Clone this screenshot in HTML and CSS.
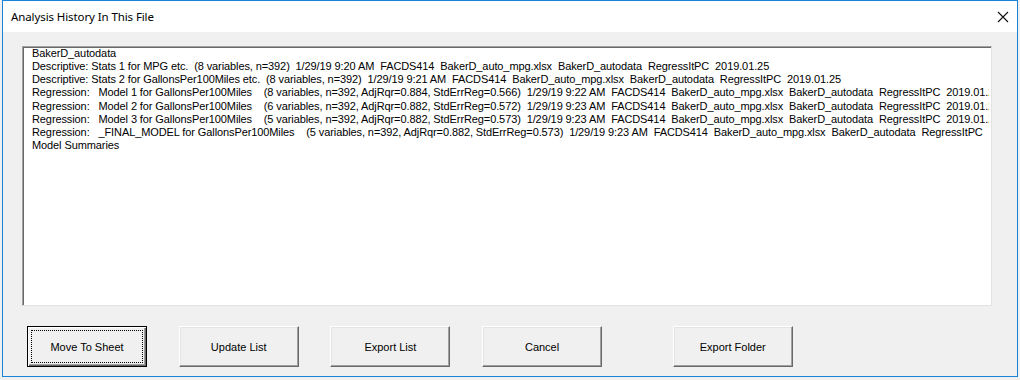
FILE: index.html
```html
<!DOCTYPE html>
<html>
<head>
<meta charset="utf-8">
<link rel="stylesheet" href="styles.css">
</head>
<body>
<div class="window">
  <div class="titlebar">
    <span class="title">Analysis History In This File</span>
    <svg class="close" width="12" height="12" viewBox="0 0 12 12"><path d="M1 1 L11 11 M11 1 L1 11" stroke="#111" stroke-width="1.1" fill="none"/></svg>
  </div>
  <div class="content">
    <div class="listbox">
      <div class="item">BakerD_autodata</div>
      <div class="item">Descriptive: Stats 1 for MPG etc.  (8 variables, n=392)  1/29/19 9:20 AM  FACDS414  BakerD_auto_mpg.xlsx  BakerD_autodata  RegressItPC  2019.01.25</div>
      <div class="item">Descriptive: Stats 2 for GallonsPer100Miles etc.  (8 variables, n=392)  1/29/19 9:21 AM  FACDS414  BakerD_auto_mpg.xlsx  BakerD_autodata  RegressItPC  2019.01.25</div>
      <div class="item">Regression:   Model 1 for GallonsPer100Miles    (8 variables, n=392, AdjRqr=0.884, StdErrReg=0.566)  1/29/19 9:22 AM  FACDS414  BakerD_auto_mpg.xlsx  BakerD_autodata  RegressItPC  2019.01.25</div>
      <div class="item">Regression:   Model 2 for GallonsPer100Miles    (6 variables, n=392, AdjRqr=0.882, StdErrReg=0.572)  1/29/19 9:23 AM  FACDS414  BakerD_auto_mpg.xlsx  BakerD_autodata  RegressItPC  2019.01.25</div>
      <div class="item">Regression:   Model 3 for GallonsPer100Miles    (5 variables, n=392, AdjRqr=0.882, StdErrReg=0.573)  1/29/19 9:23 AM  FACDS414  BakerD_auto_mpg.xlsx  BakerD_autodata  RegressItPC  2019.01.25</div>
      <div class="item">Regression:   _FINAL_MODEL for GallonsPer100Miles    (5 variables, n=392, AdjRqr=0.882, StdErrReg=0.573)  1/29/19 9:23 AM  FACDS414  BakerD_auto_mpg.xlsx  BakerD_autodata  RegressItPC</div>
      <div class="item">Model Summaries</div>
    </div>
    <div class="buttons">
      <button class="btn default"><span class="focus">Move To Sheet</span></button>
      <button class="btn">Update List</button>
      <button class="btn">Export List</button>
      <button class="btn">Cancel</button>
      <button class="btn far">Export Folder</button>
    </div>
  </div>
</div>
</body>
</html>
```
FILE: styles.css
```css
html, body {
  margin: 0;
  padding: 0;
  background: #f0f0f0;
}
body {
  width: 1020px;
  height: 380px;
  overflow: hidden;
}
.window {
  margin-left: 2px;
  width: 1014px;
  height: 375px;
  border: 1px solid #1883d7;
  display: flex;
  flex-direction: column;
  background: #f0f0f0;
}
.titlebar {
  height: 31px;
  background: #ffffff;
  display: flex;
  align-items: center;
  justify-content: space-between;
  padding: 0 8px 0 8px;
  flex: none;
}
.title {
  font-family: "Noto Sans", "Open Sans", sans-serif;
  font-size: 11.5px;
  letter-spacing: -0.1px;
  color: #000;
}
.content {
  flex: 1;
  padding: 14px 0 0 19px;
}
.listbox {
  width: 957px;
  height: 258px;
  background: #fff;
  border-top: 1px solid #a0a0a0;
  border-left: 1px solid #a0a0a0;
  border-right: 1px solid #e3e3e3;
  border-bottom: 1px solid #e3e3e3;
  box-shadow: inset 1px 1px 0 #696969;
  padding: 0 2px 0 9px;
  overflow: hidden;
  font-family: "Liberation Sans", Arial, sans-serif;
  font-size: 11px;
  letter-spacing: -0.1px;
  color: #000;
}
.item {
  height: 13.15px;
  line-height: 13px;
  white-space: pre;
  overflow: hidden;
}
.buttons {
  display: flex;
  margin-top: 20px;
  padding-left: 5px;
  column-gap: 31.7px;
}
.btn {
  width: 120px;
  height: 41px;
  background: #f0f0f0;
  border-top: 1px solid #fff;
  border-left: 1px solid #fff;
  border-right: 1px solid #696969;
  border-bottom: 1px solid #696969;
  box-shadow: inset -1px -1px 0 #a0a0a0, inset 1px 1px 0 #e3e3e3;
  font-family: "Liberation Sans", Arial, sans-serif;
  font-size: 11px;
  color: #000;
  padding: 0;
  display: flex;
  align-items: center;
  justify-content: center;
}
.btn.default {
  border: 1px solid #000;
  box-shadow: inset 1px 1px 0 #fff, inset -1px -1px 0 #696969, inset -2px -2px 0 #a0a0a0;
  padding: 3px;
}
.focus {
  flex: 1;
  align-self: stretch;
  display: flex;
  align-items: center;
  justify-content: center;
  border: 1px dotted #000;
}
.btn.far {
  margin-left: 39px;
}
```
